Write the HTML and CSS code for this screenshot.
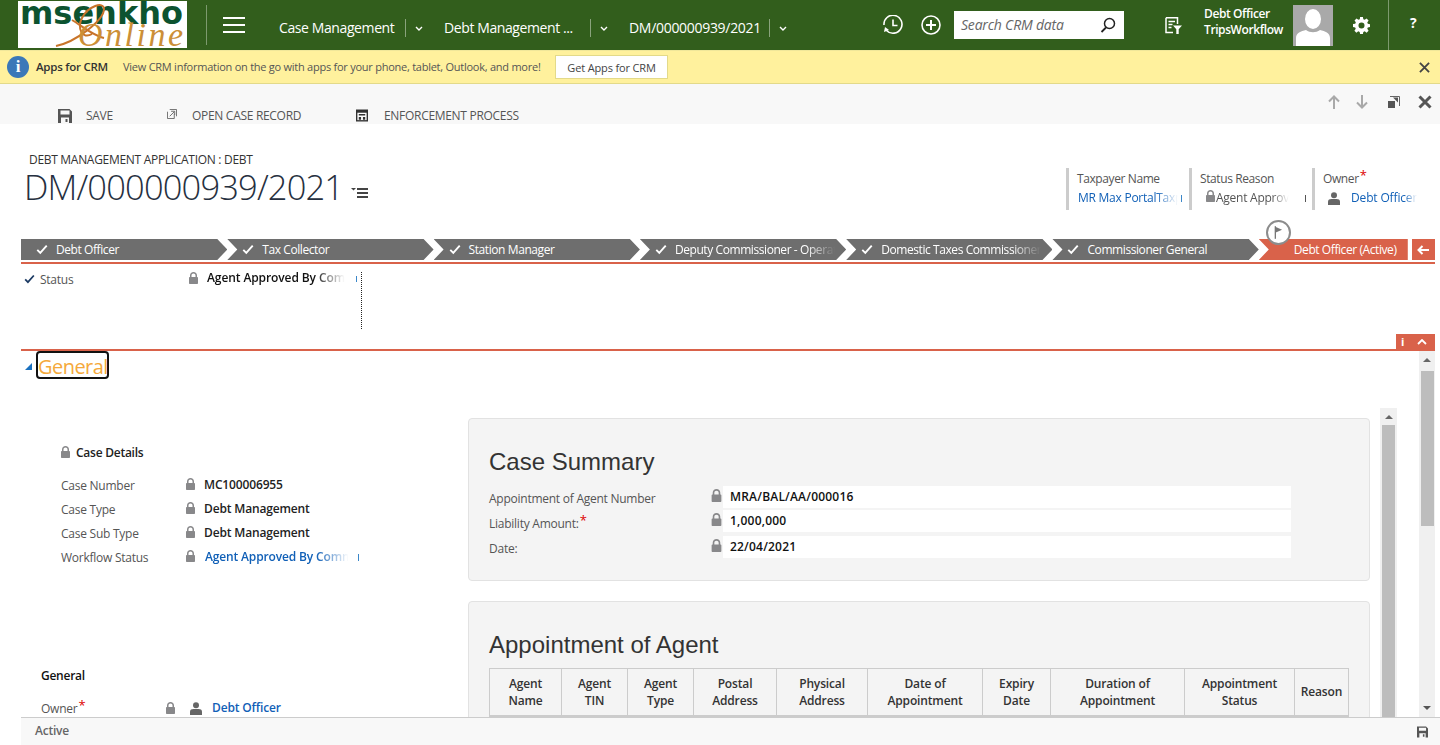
FILE: index.html
```html
<!DOCTYPE html>
<html lang="en">
<head>
<meta charset="utf-8">
<title>DM/000000939/2021</title>
<link rel="stylesheet" href="styles.css">
</head>
<body>
<svg class="defs" aria-hidden="true">
  <symbol id="lock" viewBox="0 0 9 12"><path d="M1 5V3.500C1 1.500 2.500 0 4.500 0S8 1.500 8 3.500V5h.2c.5 0 .8.3.8.8V11c0 .6-.4 1-1 1H1c-.6 0-1-.4-1-1V5.800C0 5.300.3 5 .8 5zM2.500 5h4V3.500C6.500 2.300 5.700 1.500 4.500 1.500S2.500 2.300 2.500 3.500z" fill="#88888a" fill-rule="evenodd"/></symbol>
  <symbol id="person" viewBox="0 0 12 13"><circle cx="6" cy="3.200" r="3" fill="#666"/><path d="M0 13V9.500C0 7.800 1.500 7 3.500 7h5C10.500 7 12 7.800 12 9.500V13z" fill="#666"/></symbol>
  <symbol id="check" viewBox="0 0 14 12"><path d="M1.500 6.500L5 10 12.500 1.500" fill="none" stroke="currentColor" stroke-width="2.200"/></symbol>
  <symbol id="chev" viewBox="0 0 8 6"><path d="M1 1l3 3 3-3" fill="none" stroke="#fff" stroke-width="1.400"/></symbol>
  <symbol id="floppy" viewBox="0 0 14 14"><path d="M0 0h11.500L14 2.500V14H0zM2.500 1.500V5.500h9v-4zM3 8.500V14h8V8.500zM7.500 10h2v3h-2z" fill="#555" fill-rule="evenodd"/></symbol>
</svg>

<header class="topbar">
  <div class="logo">
    <span class="logo-top">msenkho</span>
    <svg class="logo-swirl" viewBox="0 0 60 46"><path d="M4 44C24 40 52 18 52 7 52-1 36 4 30 16 25 26 30 38 40 32M20 18C30 24 42 34 52 36" fill="none" stroke="#c8742a" stroke-width="2"/></svg>
    <span class="logo-bottom">Online</span>
  </div>
  <div class="top-sep"></div>
  <div class="burger"><span></span><span></span><span></span></div>
  <nav class="crumbs">
    <span class="crumb crumb-1">Case Management</span><i class="crumb-sep"></i><svg class="chev"><use href="#chev"/></svg>
    <span class="crumb crumb-2">Debt Management ...</span><i class="crumb-sep"></i><svg class="chev"><use href="#chev"/></svg>
    <span class="crumb crumb-3">DM/000000939/2021</span><i class="crumb-sep"></i><svg class="chev"><use href="#chev"/></svg>
  </nav>
  <svg class="top-ic clock" viewBox="0 0 20 20"><path d="M3.500 15.500A9 9 0 1 0 1 10" fill="none" stroke="#fff" stroke-width="1.600"/><path d="M10 4.500V10.500H14.500" fill="none" stroke="#fff" stroke-width="1.600"/><path d="M1 17l1-5 4 3z" fill="#fff"/></svg>
  <svg class="top-ic plus" viewBox="0 0 20 20"><circle cx="10" cy="10" r="9" fill="none" stroke="#fff" stroke-width="1.600"/><path d="M10 5v10M5 10h10" stroke="#fff" stroke-width="2"/></svg>
  <div class="search">
    <span>Search CRM data</span>
    <svg viewBox="0 0 16 16"><circle cx="9.500" cy="6.500" r="5" fill="none" stroke="#222" stroke-width="1.500"/><path d="M6 10.500L1.500 15" stroke="#222" stroke-width="1.800"/></svg>
  </div>
  <svg class="top-ic filter" viewBox="0 0 17 17"><path d="M1 .8h11.500V7M1 .8V15.500h7" fill="none" stroke="#fff" stroke-width="1.500"/><path d="M3.500 4.500h6.500M3.500 7.500h4M3.500 10.500h3" stroke="#fff" stroke-width="1.300"/><path d="M8 8.500h9l-3.300 3.700V17h-2.400v-4.800z" fill="#fff"/></svg>
  <div class="user"><span>Debt Officer</span><span>TripsWorkflow</span></div>
  <svg class="avatar" viewBox="0 0 40 41"><rect width="40" height="41" fill="#a9a9a9"/><ellipse cx="20" cy="14" rx="8" ry="10" fill="#fff"/><path d="M3 41V33C3 28 8 26 13 25 17 28 23 28 27 25 32 26 37 28 37 33V41z" fill="#fff"/></svg>
  <svg class="top-ic gear" viewBox="0 0 18 18"><path d="M7.500 0h3l.4 2.400 1.500.6 2-1.400 2.100 2.100-1.400 2 .6 1.500 2.300.4v3l-2.300.4-.6 1.500 1.400 2-2.100 2.100-2-1.400-1.500.6-.4 2.200h-3l-.4-2.200-1.500-.6-2 1.400-2.100-2.100 1.400-2-.6-1.500L0 10.500v-3l2.400-.4.600-1.500-1.400-2 2.100-2.100 2 1.400 1.500-.6zM9 5.800a3.200 3.200 0 1 0 0 6.400 3.200 3.200 0 0 0 0-6.400z" fill="#fff" fill-rule="evenodd"/></svg>
  <div class="top-sep top-sep-help"></div>
  <span class="help">?</span>
</header>

<section class="notice">
  <span class="info-ic">i</span>
  <strong>Apps for CRM</strong>
  <span class="notice-msg">View CRM information on the go with apps for your phone, tablet, Outlook, and more!</span>
  <button class="notice-btn" type="button">Get Apps for CRM</button>
  <svg class="notice-x" viewBox="0 0 12 12"><path d="M1 1l10 10M11 1L1 11" stroke="#444" stroke-width="2"/></svg>
</section>

<section class="command">
  <div class="cmd cmd-save"><svg class="cmd-ic"><use href="#floppy"/></svg><span>SAVE</span></div>
  <div class="cmd cmd-open">
    <svg class="cmd-ic-open" viewBox="0 0 11 11"><path d="M3 .5h7.500V8M.5 3v7.500H8V5" fill="none" stroke="#666"/><path d="M3 8l5-5M4.500 2.500H8.500V6.500" fill="none" stroke="#666"/></svg>
    <span>OPEN CASE RECORD</span>
  </div>
  <div class="cmd cmd-enf">
    <svg class="cmd-ic-enf" viewBox="0 0 13 13"><path d="M0 0h13v13H0z" fill="#333"/><path d="M1.500 3.500h10v8h-10z" fill="#fff"/><path d="M3 5h7v1.500H3zM3 8h2.500v3H3zM7.500 8H10v3H7.500z" fill="#333"/></svg>
    <span>ENFORCEMENT PROCESS</span>
  </div>
  <div class="cmd-right">
    <svg viewBox="0 0 12 14"><path d="M6 14V2M1 6.500L6 1.500l5 5" fill="none" stroke="#a9a9a9" stroke-width="2"/></svg>
    <svg viewBox="0 0 12 14"><path d="M6 0V12M1 7.500l5 5 5-5" fill="none" stroke="#a9a9a9" stroke-width="2"/></svg>
    <svg viewBox="0 0 12 12"><path d="M2 .5h9.500V10" fill="none" stroke="#666"/><path d="M0 5h7v7H0z" fill="#555"/><path d="M5 1.500h5v5z" fill="#555"/></svg>
    <svg class="cmd-close" viewBox="0 0 14 14"><path d="M1.500 1.500l11 11M12.500 1.500l-11 11" stroke="#555" stroke-width="3"/></svg>
  </div>
</section>

<main class="form">
  <section class="record-head">
    <div class="record-title">
      <div class="entity">DEBT MANAGEMENT APPLICATION : DEBT</div>
      <div class="title-row">
        <h1>DM/000000939/2021</h1>
        <svg class="title-menu" viewBox="0 0 17 11"><path d="M0 1h5L2.500 3.500z" fill="#444"/><path d="M6 1h11v2H6zM6 5h11v2H6zM6 9h11v2H6z" fill="#444"/></svg>
      </div>
    </div>
    <div class="head-fields">
      <div class="hf hf-1">
        <span class="hf-label">Taxpayer Name</span>
        <div class="hf-line"><span class="hf-val link fade">MR Max PortalTaxpayer</span><i class="mark mark-blue"></i></div>
      </div>
      <div class="hf hf-2">
        <span class="hf-label">Status Reason</span>
        <div class="hf-line hf-line-lock"><svg class="lock-ic"><use href="#lock"/></svg><span class="hf-val fade hf-status">Agent Approved</span><i class="mark mark-dark"></i></div>
      </div>
      <div class="hf hf-3">
        <span class="hf-label">Owner<em class="req">*</em></span>
        <div class="hf-line hf-line-owner"><svg class="person-ic"><use href="#person"/></svg><span class="hf-val link fade hf-owner">Debt Officer</span></div>
      </div>
    </div>
  </section>

  <section class="process">
    <div class="stages">
      <div class="stage stage-first"><svg class="tick"><use href="#check"/></svg><span>Debt Officer</span></div>
      <div class="stage"><svg class="tick"><use href="#check"/></svg><span>Tax Collector</span></div>
      <div class="stage"><svg class="tick"><use href="#check"/></svg><span>Station Manager</span></div>
      <div class="stage"><svg class="tick"><use href="#check"/></svg><span class="stage-fade">Deputy Commissioner - Operations</span></div>
      <div class="stage"><svg class="tick"><use href="#check"/></svg><span class="stage-fade">Domestic Taxes Commissioner</span></div>
      <div class="stage"><svg class="tick"><use href="#check"/></svg><span>Commissioner General</span></div>
      <div class="stage stage-active"><span>Debt Officer (Active)</span></div>
      <div class="stage-back"><svg viewBox="0 0 12 10"><path d="M5.500 1L1.500 5l4 4M1.500 5H12" fill="none" stroke="#fff" stroke-width="2"/></svg></div>
    </div>
    <div class="flag"><svg viewBox="0 0 10 14"><path d="M1.500 0v14" stroke="#777" stroke-width="1.500"/><path d="M2 1l7 3-7 3z" fill="#777"/></svg></div>
  </section>

  <section class="status">
    <div class="status-row">
      <svg class="status-tick"><use href="#check"/></svg>
      <span class="status-label">Status</span>
      <svg class="lock-ic"><use href="#lock"/></svg>
      <strong class="fade status-val">Agent Approved By Commissioner</strong>
      <i class="mark mark-blue status-mark"></i>
    </div>
    <div class="dotted"></div>
    <div class="status-tabs">
      <span class="tab-i">i</span>
      <svg viewBox="0 0 10 6"><path d="M1 5l4-4 4 4" fill="none" stroke="#fff" stroke-width="1.800"/></svg>
    </div>
  </section>

  <section class="general">
    <div class="general-main">
      <div class="section-head">
        <i class="tri"></i>
        <h2>General</h2>
      </div>
      <div class="columns">
        <div class="left">
          <div class="details">
            <div class="details-head"><svg class="lock-ic"><use href="#lock"/></svg><strong>Case Details</strong></div>
            <div class="field"><span>Case Number</span><svg class="lock-ic"><use href="#lock"/></svg><strong>MC100006955</strong></div>
            <div class="field"><span>Case Type</span><svg class="lock-ic"><use href="#lock"/></svg><strong>Debt Management</strong></div>
            <div class="field"><span>Case Sub Type</span><svg class="lock-ic"><use href="#lock"/></svg><strong>Debt Management</strong></div>
            <div class="field"><span>Workflow Status</span><svg class="lock-ic"><use href="#lock"/></svg><strong class="link fade wf">Agent Approved By Commissioner</strong><i class="mark mark-blue"></i></div>
          </div>
          <div class="left-general">
            <strong class="lg-title">General</strong>
            <div class="owner-row">
              <span>Owner<em class="req">*</em></span>
              <svg class="lock-ic"><use href="#lock"/></svg>
              <svg class="person-ic"><use href="#person"/></svg>
              <strong class="link">Debt Officer</strong>
            </div>
          </div>
        </div>
        <div class="right">
          <article class="panel panel-summary">
            <h3>Case Summary</h3>
            <div class="sum-row"><span>Appointment of Agent Number</span><svg class="lock-ic"><use href="#lock"/></svg><strong>MRA/BAL/AA/000016</strong></div>
            <div class="sum-row sum-row-mid"><span>Liability Amount:<em class="req">*</em></span><svg class="lock-ic"><use href="#lock"/></svg><strong>1,000,000</strong></div>
            <div class="sum-row sum-row-last"><span>Date:</span><svg class="lock-ic"><use href="#lock"/></svg><strong>22/04/2021</strong></div>
          </article>
          <article class="panel panel-agent">
            <h3>Appointment of Agent</h3>
            <table>
              <colgroup><col class="c1"><col class="c2"><col class="c3"><col class="c4"><col class="c5"><col class="c6"><col class="c7"><col class="c8"><col class="c9"><col class="c10"></colgroup>
              <thead><tr><th>Agent<br>Name</th><th>Agent<br>TIN</th><th>Agent<br>Type</th><th>Postal<br>Address</th><th>Physical<br>Address</th><th>Date of<br>Appointment</th><th>Expiry<br>Date</th><th>Duration of<br>Appointment</th><th>Appointment<br>Status</th><th>Reason</th></tr></thead>
              <tbody><tr><td></td><td></td><td></td><td></td><td></td><td></td><td></td><td></td><td></td><td></td></tr></tbody>
            </table>
          </article>
        </div>
        <div class="scroll scroll-inner">
          <i class="arrow-up"></i>
          <div class="thumb"></div>
        </div>
      </div>
    </div>
    <div class="scroll scroll-outer">
      <i class="arrow-up"></i>
      <div class="thumb"></div>
      <i class="arrow-down"></i>
    </div>
  </section>
</main>

<footer class="footer">
  <strong>Active</strong>
  <svg class="foot-save"><use href="#floppy"/></svg>
</footer>
</body>
</html>
```

FILE: styles.css
```css
* { box-sizing: border-box; }
html, body { margin: 0; height: 100%; }
body {
  display: flex;
  flex-direction: column;
  height: 100vh;
  overflow: hidden;
  background: #fff;
  color: #444;
  font: 12px/16px "Open Sans", sans-serif;
  letter-spacing: -.25px;
}
.defs { display: none; }
strong { font-weight: 600; }
em.req { color: #d00; font-style: normal; font-size: 13px; vertical-align: 3px; line-height: 0; margin-left: 1px; }
.link { color: #1160b7; }
.fade { -webkit-mask-image: linear-gradient(to right, #000 75%, transparent 97%); mask-image: linear-gradient(to right, #000 75%, transparent 97%); overflow: hidden; white-space: nowrap; display: block; }
.lock-ic { width: 9px; height: 12px; flex: none; display: block; }
.person-ic { width: 12px; height: 13px; flex: none; display: block; }
.mark { width: 1px; height: 7px; display: block; flex: none; }
.mark-blue { background: #3b87c9; }
.mark-dark { background: #555; }

/* top bar */
.topbar { flex: none; height: 50px; background: #325e1c; display: flex; align-items: center; color: #fff; }
.logo { position: relative; flex: none; width: 169px; height: 47px; margin: 0 0 1px 18px; background: #fff; overflow: hidden; }
.logo-top { position: absolute; left: 2px; top: -4px; font: 700 32px/32px "DejaVu Sans", sans-serif; letter-spacing: 0; color: #0c5330; }
.logo-swirl { position: absolute; left: 34px; top: 1px; width: 60px; height: 46px; }
.logo-bottom { position: absolute; left: 60px; top: 20px; font: italic 400 34px/27px "Liberation Serif", serif; letter-spacing: 2.500px; color: #cc8f37; }
.top-sep { width: 1px; height: 40px; background: #7d9a6e; margin-left: 19px; flex: none; }
.burger { width: 22px; margin-left: 16px; flex: none; display: flex; flex-direction: column; gap: 5px; }
.burger span { height: 2px; background: #fff; display: block; }
.crumbs { display: flex; align-items: center; margin-left: 34px; font-size: 14px; letter-spacing: -.4px; color: #fff; flex: none; margin-top: 6px; }
.crumb { white-space: nowrap; }
.crumb-1 { width: 126px; }
.crumb-2 { width: 146px; }
.crumb-3 { width: 140px; letter-spacing: -.3px; }
.crumb-sep { width: 1px; height: 18px; background: #8aa37c; display: block; }
.chev { width: 8px; height: 6px; margin: 2px 21px 0 9px; }
.top-ic { flex: none; display: block; }
.clock { width: 20px; height: 20px; margin-left: 96px; margin-top: -1px; }
.crumbs .chev:last-of-type { margin-right: 0; }
.plus { width: 20px; height: 20px; margin-left: 18px; margin-top: -1px; }
.search { width: 170px; height: 28px; background: #fff; margin-left: 13px; display: flex; align-items: center; justify-content: space-between; padding: 0 8px 0 7px; flex: none; }
.search span { font-style: italic; font-size: 14px; color: #666; letter-spacing: -.2px; white-space: nowrap; }
.search svg { width: 16px; height: 16px; display: block; }
.filter { width: 17px; height: 17px; margin-left: 41px; }
.user { margin-left: 22px; width: 89px; flex: none; display: flex; flex-direction: column; font-weight: 600; font-size: 12px; line-height: 16px; letter-spacing: -.4px; white-space: nowrap; margin-top: -6px; }
.avatar { width: 40px; height: 41px; flex: none; display: block; margin-top: 1px; }
.gear { width: 17px; height: 17px; margin-left: 20px; }
.top-sep-help { height: 50px; margin-left: 18px; }
.help { font-weight: 700; font-size: 14px; margin-left: 21px; margin-top: -4px; }

/* notification */
.notice { flex: none; height: 34px; background: #fff19d; border-top: 1px solid #f0e79a; border-bottom: 1px solid #e3da8a; display: flex; align-items: center; color: #444; }
.info-ic { width: 22px; height: 22px; margin-left: 7px; border-radius: 50%; background: #3b78b8; color: #fff; font: 700 17px/22px "Liberation Serif", serif; text-align: center; flex: none; }
.notice strong { margin-left: 7px; width: 87px; color: #333; flex: none; font-size: 11.500px; }
.notice-msg { width: 432px; flex: none; font-size: 11px; letter-spacing: -.25px; white-space: nowrap; color: #555; }
.notice-btn { width: 113px; height: 24px; flex: none; background: #fff; border: 1px solid #e3da8a; padding: 0; font: 11px "Open Sans", sans-serif; letter-spacing: -.15px; color: #444; }
.notice-x { width: 11px; height: 11px; margin-left: auto; margin-right: 10px; }

/* command bar */
.command { flex: none; height: 40px; background: #f8f8f8; position: relative; display: flex; align-items: flex-end; color: #555; }
.cmd { display: flex; align-items: center; height: 17px; font-size: 12px; letter-spacing: -.3px; white-space: nowrap; }
.cmd-save { margin-left: 58px; width: 109px; gap: 14px; }
.cmd-ic { width: 14px; height: 14px; display: block; }
.cmd-open { width: 189px; gap: 15px; }
.cmd-ic-open { width: 10px; height: 10px; display: block; margin-top: -4px; }
.cmd-enf { gap: 16px; }
.cmd-ic-enf { width: 12px; height: 13px; display: block; }
.cmd-right { position: absolute; right: 8px; top: 11px; display: flex; align-items: center; }
.cmd-right svg { display: block; width: 12px; height: 14px; margin-left: 16px; }
.cmd-right svg:nth-child(3) { height: 12px; margin-left: 20px; }
.cmd-right .cmd-close { width: 14px; height: 14px; margin-left: 18px; }

/* form */
.form { flex: 1; min-height: 0; display: flex; flex-direction: column; padding-left: 21px; padding-right: 5px; overflow: hidden; }
.record-head { flex: none; height: 114px; display: flex; justify-content: space-between; }
.record-title { padding-top: 28px; }
.entity { font-size: 12px; line-height: 16px; color: #333; margin-left: 8px; letter-spacing: -.3px; white-space: nowrap; }
.title-row { display: flex; align-items: center; margin-left: 3px; margin-top: -1px; }
h1 { margin: 0; font-weight: 300; font-size: 34.500px; line-height: 40px; color: #263040; letter-spacing: -.85px; white-space: nowrap; }
.title-menu { width: 17px; height: 11px; margin: 11px 0 0 8px; display: block; }
.head-fields { display: flex; padding-top: 44px; margin-right: 18px; }
.hf { border-left: 3px solid #ccc; height: 42px; padding-left: 8px; display: flex; flex-direction: column; }
.hf-1 { width: 123px; }
.hf-2 { width: 123px; }
.hf-3 { width: 105px; }
.hf-label { line-height: 16px; margin-top: 3px; white-space: nowrap; color: #555; letter-spacing: -.4px; }
.hf-line { display: flex; align-items: center; margin-top: 3px; height: 16px; }
.hf-val { line-height: 16px; font-weight: 500; }
.hf-1 .hf-val { margin-left: 1px; width: 103px; }
.hf-line-lock { padding-left: 5px; }
.hf-line-lock .lock-ic { margin-top: -4px; width: 11px; }
.hf-status { width: 75px; color: #555; }
.mark-dark { margin-left: 14px; }
.hf-line-owner { padding-left: 5px; gap: 11px; }
.hf-owner { width: 68px; -webkit-mask-image: linear-gradient(to right, #000 80%, transparent 100%); mask-image: linear-gradient(to right, #000 80%, transparent 100%); letter-spacing: -.15px; }

/* process */
.process { flex: none; height: 26px; position: relative; border-bottom: 2px solid #d9624a; padding-top: 1px; }
.stages { display: flex; height: 21px; }
.stage { flex: none; width: 206.300px; height: 21px; background: #6e6e6e; color: #fff; display: flex; align-items: center; padding-left: 15px; gap: 8px; font-size: 12px; letter-spacing: -.42px; white-space: nowrap; clip-path: polygon(0 0, calc(100% - 10px) 0, 100% 50%, calc(100% - 10px) 100%, 0 100%, 10px 50%); }
.stage-first { clip-path: polygon(0 0, calc(100% - 10px) 0, 100% 50%, calc(100% - 10px) 100%, 0 100%); }
.tick { width: 12px; height: 11px; flex: none; color: #fff; }
.stage-fade { width: 160px; overflow: hidden; -webkit-mask-image: linear-gradient(to right, #000 82%, transparent 100%); mask-image: linear-gradient(to right, #000 82%, transparent 100%); }
.stage-active { background: #d9624a; width: 149px; padding-left: 35px; clip-path: polygon(0 0, 100% 0, 100% 100%, 0 100%, 10px 50%); }
.stage-back { flex: none; width: 23px; height: 21px; margin-left: 4px; background: #d9624a; display: flex; align-items: center; justify-content: center; }
.stage-back svg { width: 12px; height: 10px; display: block; }
.flag { position: absolute; left: 1245px; top: -18px; width: 25px; height: 25px; border-radius: 50%; border: 2px solid #8c8c8c; background: #fff; display: flex; align-items: center; justify-content: center; }
.flag svg { width: 9px; height: 13px; display: block; }

/* status */
.status { flex: none; height: 87px; border-bottom: 2px solid #d9624a; position: relative; }
.status-row { display: flex; align-items: center; height: 16px; margin-top: 7px; }
.status-tick { width: 11px; height: 10px; margin-left: 3px; color: #1b3a63; display: block; }
.status-label { margin-left: 5px; width: 149px; color: #555; padding-top: 1px; }
.status-row .lock-ic { margin-top: -2px; }
.status-val { margin-left: 9px; margin-top: -2px; width: 142px; color: #111; letter-spacing: -.1px; }
.status-mark { margin-left: 7px; height: 6px; }
.dotted { position: absolute; left: 340px; top: 8px; height: 57px; border-left: 1px dotted #222; }
.status-tabs { position: absolute; right: 0; bottom: 0; width: 39px; height: 15px; background: #d9624a; display: flex; align-items: center; padding-left: 5px; gap: 13px; color: #fff; font-weight: 700; font-size: 11px; }
.status-tabs svg { width: 10px; height: 6px; display: block; }
.tab-i { width: 3px; }

/* general section */
.general { flex: 1; min-height: 0; display: flex; overflow: hidden; }
.general-main { flex: 1; min-width: 0; }
.section-head { height: 29px; display: flex; align-items: flex-start; padding-left: 4px; }
.tri { width: 0; height: 0; border-style: solid; border-width: 0 0 7px 7px; border-color: transparent transparent #1a71bf transparent; display: block; margin-right: 4px; margin-top: 12px; }
h2 { margin: 0; width: 73px; height: 28px; border: 2px solid #111; border-radius: 4px; color: #f5a93b; font-weight: 400; font-size: 20px; line-height: 28px; letter-spacing: -.55px; white-space: nowrap; padding-left: 0; }
.columns { display: flex; margin-top: 28px; height: 400px; }
.left { flex: none; width: 447px; }
.details { padding: 37px 0 0 40px; height: 260px; }
.details-head { display: flex; gap: 6px; align-items: center; height: 16px; color: #222; margin-bottom: 12px; }
.details-head .lock-ic { margin-top: -3px; }
.field { display: flex; align-items: center; height: 24px; }
.field > span { width: 125px; color: #555; padding-top: 2px; }
.field > strong { margin-left: 9px; color: #222; letter-spacing: -.15px; }
.field .lock-ic { margin-top: -2px; }
.field .wf.fade { width: 148px; color: #1160b7; margin-left: 10px; }
.field .mark { margin-left: 5px; }
.left-general { padding-left: 20px; }
.lg-title { color: #111; display: block; line-height: 16px; }
.owner-row { display: flex; align-items: center; margin-top: 16px; height: 16px; }
.owner-row > span { width: 125px; color: #555; padding-top: 2px; }
.owner-row .person-ic { margin-left: 15px; }
.owner-row > strong { margin-left: 10px; letter-spacing: -.15px; }
.right { flex: none; width: 902px; padding-top: 10px; }
.panel { background: #f4f4f4; border: 1px solid #e2e2e2; border-radius: 4px; padding: 28px 20px 22px; }
h3 { margin: 0; font: 400 24px/30px "Liberation Sans", sans-serif; letter-spacing: 0; color: #333; white-space: nowrap; }
.panel-summary h3 { margin-bottom: 9px; }
.sum-row { display: flex; align-items: center; height: 22px; width: 802px; margin-bottom: 2px; }
.sum-row-mid { margin-bottom: 4px; }
.sum-row-last { margin-bottom: 0; }
.sum-row > span { width: 222px; color: #555; flex: none; padding-top: 4px; }
.sum-row-mid > span { padding-top: 6px; }
.sum-row > strong { flex: 1; background: #fff; height: 22px; line-height: 22px; padding-left: 7px; margin-left: 1px; color: #111; letter-spacing: .2px; }
.sum-row .lock-ic { width: 11px; height: 13px; margin-top: -3px; }
.panel-agent { margin-top: 20px; height: 400px; }
.panel-agent h3 { margin-bottom: 8px; }
table { width: 859px; border-collapse: collapse; table-layout: fixed; }
th, td { border: 1px solid #ccc; padding: 0; }
th { height: 47px; font-weight: 600; color: #333; line-height: 17px; font-size: 12px; text-align: center; letter-spacing: -.15px; }
td { height: 30px; }
thead { border-bottom: 2px solid #ccc; }
.c1 { width: 72px; } .c2 { width: 66px; } .c3 { width: 66px; } .c4 { width: 83px; } .c5 { width: 91px; }
.c6 { width: 115px; } .c7 { width: 68px; } .c8 { width: 134px; } .c9 { width: 110px; } .c10 { width: 54px; }

.scroll { flex: none; background: #f0f0f0; position: relative; display: flex; flex-direction: column; align-items: center; }
.scroll-inner { width: 17px; margin-left: 10px; height: 400px; }
.scroll-outer { width: 16px; height: 100%; margin-left: 0; }
.arrow-up { width: 0; height: 0; border-style: solid; border-width: 0 4px 4px; border-color: transparent transparent #666; display: block; margin-top: 7px; }
.arrow-down { position: absolute; bottom: 7px; left: 4px; width: 0; height: 0; border-style: solid; border-width: 4px 4px 0; border-color: #555 transparent transparent; display: block; }
.thumb { background: #bdbdbd; width: 13px; }
.scroll-inner .thumb { margin-top: 6px; height: 292px; }
.scroll-outer .thumb { margin-top: 9px; height: 155px; }

/* footer */
.footer { flex: none; height: 28px; margin-left: 21px; background: #f8f8f8; border-top: 1px solid #ccc; display: flex; align-items: center; justify-content: space-between; padding: 0 12px 2px 14px; }
.footer strong { color: #666; font-size: 12px; }
.foot-save { width: 11px; height: 12px; display: block; margin-top: 2px; }
```
